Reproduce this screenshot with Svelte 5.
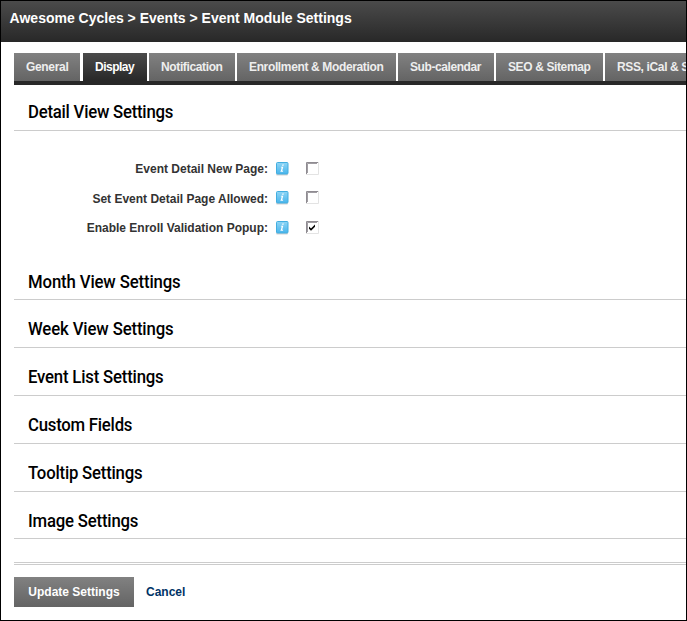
<script>
  const tabs = [
    { label: 'General', w: 66, gap: 3, ls: -0.33 },
    { label: 'Display', w: 64, gap: 2, ls: -0.5 },
    { label: 'Notification', w: 86, gap: 2, ls: -0.37 },
    { label: 'Enrollment & Moderation', w: 159, gap: 2, ls: -0.36 },
    { label: 'Sub-calendar', w: 96, gap: 2, ls: -0.42 },
    { label: 'SEO & Sitemap', w: 107, gap: 2, ls: -0.38 },
    { label: 'RSS, iCal & Social', w: 130, gap: 0, ls: -0.36 }
  ];
  const options = [
    { label: 'Event Detail New Page:', h: 30, checked: false },
    { label: 'Set Event Detail Page Allowed:', h: 29, checked: false },
    { label: 'Enable Enroll Validation Popup:', h: 30, checked: true }
  ];
  const sections = [
    { title: 'Month View Settings', h: 48, ls: -0.14, pad: 5 },
    { title: 'Week View Settings', h: 48, ls: -0.14, pad: 6 },
    { title: 'Event List Settings', h: 48, ls: -0.2, pad: 6 },
    { title: 'Custom Fields', h: 48, ls: -0.25, pad: 6 },
    { title: 'Tooltip Settings', h: 48, ls: -0.22, pad: 6 },
    { title: 'Image Settings', h: 47, ls: -0.2, pad: 5 }
  ];
  let active = $state('Display');
</script>

<div class="window">
  <header>Awesome Cycles &gt; Events &gt; Event Module Settings</header>
  <main>
    <nav>
      {#each tabs as t}
        <button
          class="tab"
          class:active={t.label === active}
          style="width:{t.w}px;margin-right:{t.gap}px;letter-spacing:{t.ls}px"
          onclick={() => (active = t.label)}>{t.label}</button>
      {/each}
    </nav>
    <h2 class="first"><span style="letter-spacing:-0.25px">Detail View Settings</span></h2>
    <div class="options">
      {#each options as o}
        <div class="row" style="height:{o.h}px">
          <span class="label">{o.label}</span>
          <svg class="info" width="14" height="15" viewBox="0 0 14 15">
            <defs>
              <linearGradient id="blue" x1="0" y1="0" x2="0" y2="1">
                <stop offset="0" stop-color="#8fd5f5" />
                <stop offset="1" stop-color="#48b5ec" />
              </linearGradient>
            </defs>
            <rect x="1" y="12.5" width="12" height="2" rx="1" fill="#d4d4d4" />
            <rect x="1.5" y="1.5" width="11.5" height="11.5" rx="1" fill="url(#blue)" stroke="#42aee0" />
            <path d="M7.4 3.4h1.4l-.3 1.3H7.1zM6 5.7h2.3L7.2 9.8h1l-.2.9H5.4l.2-.9h.3l.8-3.2h-.9z" fill="#fff" />
          </svg>
          <svg class="check" width="13" height="13" viewBox="0 0 13 13">
            <path d="M0 12.5h12.5V0" fill="none" stroke="#e3e3e3" />
            <path d="M.5 12V.5H12" fill="none" stroke="#8f8b91" />
            <path d="M1.5 11V1.5H11" fill="none" stroke="#77737a" stroke-width=".7" />
            {#if o.checked}
              <path d="M3 5.5l2 2 4-4v2.2l-4 4-2-2z" fill="#000" />
            {/if}
          </svg>
        </div>
      {/each}
    </div>
    {#each sections as s}
      <h2 style="height:{s.h}px;padding-bottom:{s.pad}px"><span style="letter-spacing:{s.ls}px">{s.title}</span></h2>
    {/each}
    <div class="rule"></div>
    <footer>
      <button class="update">Update Settings</button>
      <a href="#cancel">Cancel</a>
    </footer>
  </main>
</div>

<style>
  .window {
    box-sizing: border-box;
    width: 687px;
    height: 621px;
    border: 1px solid #000;
    background: #fff;
    overflow: hidden;
    font: bold 12px 'Liberation Sans', Arial, sans-serif;
    color: #333;
  }
  header {
    height: 41px;
    box-sizing: border-box;
    padding: 9px 0 0 8.6px;
    font-size: 14px;
    line-height: 16px;
    color: #fff;
    background: linear-gradient(#4b4b4b, #282828);
  }
  main { padding: 11px 0 0 13px; }
  nav {
    display: flex;
    height: 28px;
    border-bottom: 4px solid #282828;
    overflow: hidden;
  }
  button {
    border: 0;
    font: inherit;
    color: #fff;
    background: linear-gradient(#818181, #646464);
  }
  .tab {
    flex: none;
    padding: 0 0 0 12px;
    text-align: left;
    white-space: nowrap;
    color: #eee;
  }
  .tab.active { background: linear-gradient(#4b4b4b, #282828); color: #fff; }
  h2 {
    display: flex;
    align-items: flex-end;
    box-sizing: border-box;
    margin: 0;
    padding: 0 0 6px 14px;
    border-bottom: 1px solid #ccc;
    font: 500 18px/24px Roboto, sans-serif;
    color: #000;
    white-space: nowrap;
  }
  h2 span { transform: scaleX(0.93); transform-origin: left; }
  .first { height: 46px; }
  .options { height: 121px; box-sizing: border-box; padding-top: 23px; }
  .row { display: flex; align-items: center; }
  .label { width: 254px; text-align: right; white-space: nowrap; }
  .info { margin: 0 0 2px 7px; }
  .check { margin: 0 0 2px 17px; }
  .rule { height: 26px; box-sizing: border-box; border-bottom: 3px double #ccc; }
  footer { display: flex; align-items: center; margin-top: 12px; }
  .update { width: 120px; height: 30px; padding: 0; }
  a { margin-left: 12px; color: #036; text-decoration: none; }
</style>
